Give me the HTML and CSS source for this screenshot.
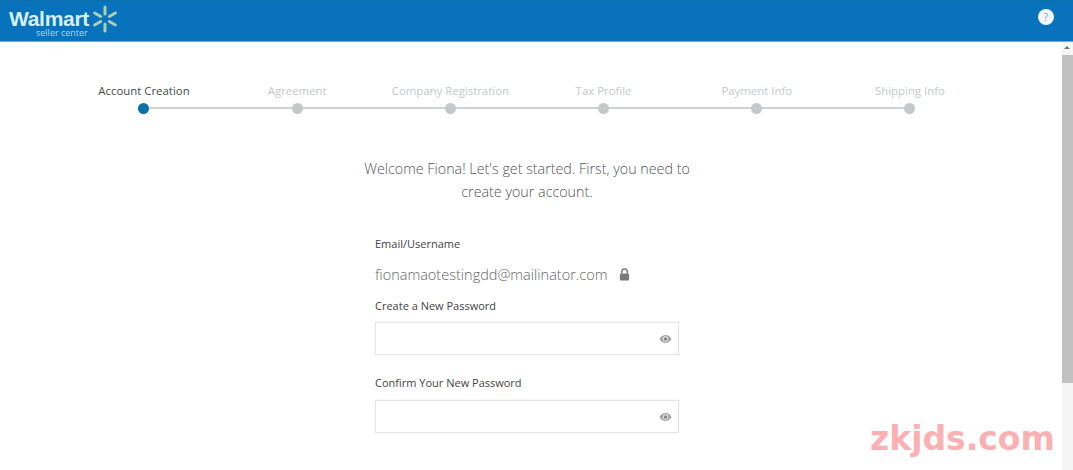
FILE: index.html
```html
<!DOCTYPE html>
<html>

<head>
    <meta charset="utf-8" />
    <title>Seller Center</title>
    <link rel="stylesheet" href="styles.css">
</head>

<body>
    <header class="topbar">
        <div class="brand">
            <div class="brand-text">
                <div class="brand-name">Walmart</div>
                <div class="brand-sub">seller center</div>
            </div>
            <svg class="spark" viewBox="0 0 30 30" width="30" height="30">
                <g stroke="#a9d0b4" stroke-width="3" stroke-linecap="round">
                    <line x1="15" y1="3" x2="15" y2="10" />
                    <line x1="15" y1="20" x2="15" y2="27" />
                    <line x1="4.6" y1="9" x2="10.7" y2="12.5" />
                    <line x1="19.3" y1="17.5" x2="25.4" y2="21" />
                    <line x1="4.6" y1="21" x2="10.7" y2="17.5" />
                    <line x1="19.3" y1="12.5" x2="25.4" y2="9" />
                </g>
            </svg>
        </div>
        <div class="help">?</div>
    </header>

    <div class="page">
        <main class="content">
            <ol class="steps">
                <li class="step active"><span class="step-label">Account Creation</span><span class="dot"></span></li>
                <li class="step"><span class="step-label">Agreement</span><span class="dot"></span></li>
                <li class="step"><span class="step-label">Company Registration</span><span class="dot"></span></li>
                <li class="step"><span class="step-label">Tax Profile</span><span class="dot"></span></li>
                <li class="step"><span class="step-label">Payment Info</span><span class="dot"></span></li>
                <li class="step"><span class="step-label">Shipping Info</span><span class="dot"></span></li>
            </ol>

            <p class="welcome">Welcome Fiona! Let's get started. First, you need to<br>create your account.</p>

            <form class="account-form">
                <label class="field-label">Email/Username</label>
                <div class="email-row">
                    <span>fionamaotestingdd@mailinator.com</span>
                    <svg class="lock" viewBox="0 0 12 14" width="11" height="13">
                        <path d="M3 6V4a3 3 0 0 1 6 0v2" fill="none" stroke="#7a7a7a" stroke-width="1.6" />
                        <rect x="1" y="6" width="10" height="7.5" rx="1" fill="#7a7a7a" />
                    </svg>
                </div>

                <label class="field-label password-label">Create a New Password</label>
                <div class="input-box">
                    <svg class="eye" viewBox="0 0 14 10" width="13" height="10">
                        <path d="M0.5 5C2.2 2 4.4 0.8 7 0.8S11.8 2 13.5 5C11.8 8 9.6 9.2 7 9.2S2.2 8 0.5 5Z" fill="#a5a5a5" />
                        <circle cx="7" cy="5" r="2.9" fill="#eee" />
                        <circle cx="7" cy="5" r="2" fill="#858585" />
                    </svg>
                </div>

                <label class="field-label confirm-label">Confirm Your New Password</label>
                <div class="input-box">
                    <svg class="eye" viewBox="0 0 14 10" width="13" height="10">
                        <path d="M0.5 5C2.2 2 4.4 0.8 7 0.8S11.8 2 13.5 5C11.8 8 9.6 9.2 7 9.2S2.2 8 0.5 5Z" fill="#a5a5a5" />
                        <circle cx="7" cy="5" r="2.9" fill="#eee" />
                        <circle cx="7" cy="5" r="2" fill="#858585" />
                    </svg>
                </div>
            </form>
        </main>

        <div class="scrollbar">
            <div class="scroll-arrow"></div>
            <div class="scroll-thumb"></div>
        </div>
    </div>

    <div class="watermark">zkjds.com</div>
</body>

</html>
```

FILE: styles.css
```css
html,
body {
    height: 100%;
}

body {
    margin: 0;
    overflow: hidden;
    display: flex;
    flex-direction: column;
    background-color: #fff;
    font-family: "Open Sans", "Liberation Sans", sans-serif;
    color: #444;
}

.topbar {
    flex: none;
    height: 42px;
    box-sizing: border-box;
    border-top: 1px solid #0a6ea6;
    border-bottom: 1px solid #5fb2de;
    background-color: #0872bd;
    display: flex;
    align-items: flex-start;
    justify-content: space-between;
    padding: 0 19px 0 9px;
}

.brand {
    display: flex;
    align-items: flex-start;
}

.brand-text {
    width: 81px;
}

.brand-name {
    margin-top: 8px;
    font-family: "Liberation Sans", sans-serif;
    font-size: 21px;
    line-height: 20px;
    font-weight: 700;
    letter-spacing: -0.3px;
    color: #d6f0f7;
}

.brand-sub {
    padding-left: 27px;
    font-size: 9px;
    line-height: 8px;
    white-space: nowrap;
    color: #a9d8ee;
}

.spark {
    margin: 3px 0 0 0;
}

.help {
    width: 16px;
    height: 16px;
    margin-top: 8px;
    border-radius: 50%;
    background-color: #f2f8fb;
    color: #8a9aa5;
    font-size: 10px;
    line-height: 16px;
    text-align: center;
}

.page {
    flex: 1;
    min-height: 0;
    display: flex;
}

.content {
    flex: 1;
    min-width: 0;
    display: flex;
    flex-direction: column;
}

.steps {
    list-style: none;
    display: grid;
    grid-template-columns: repeat(6, 153.2px);
    margin: 0;
    padding: 41px 0 0 67.4px;
}

.step {
    position: relative;
    display: flex;
    flex-direction: column;
    align-items: center;
    color: #c4c8ca;
    font-size: 11.4px;
}

.step-label {
    height: 17px;
    line-height: 15px;
    white-space: nowrap;
}

.active {
    color: #4a4a4a;
}

.dot {
    position: relative;
    z-index: 1;
    width: 11px;
    height: 11px;
    margin-top: 3px;
    border-radius: 50%;
    background-color: #c3c8c9;
}

.active .dot {
    background-color: #0d6fa6;
}

/* connector runs to the next step's dot */
.step:not(:last-child)::after {
    content: "";
    position: absolute;
    left: 50%;
    top: 24px;
    width: 100%;
    height: 2px;
    background-color: #cdd2d2;
}

.welcome {
    margin: 43px 0 0 0;
    padding-right: 8px;
    text-align: center;
    font-size: 14.3px;
    font-weight: 300;
    line-height: 23px;
    color: #555;
}

.account-form {
    width: 304px;
    margin: 33px 0 0 375px;
    display: flex;
    flex-direction: column;
}

.field-label {
    font-size: 11px;
    line-height: 16px;
    color: #444;
}

.email-row {
    margin-top: 12px;
    display: flex;
    align-items: center;
    gap: 12px;
    height: 20px;
    font-size: 14.5px;
    font-weight: 300;
    white-space: nowrap;
    color: #666;
}

.password-label {
    margin-top: 14px;
}

.confirm-label {
    margin-top: 20px;
    margin-bottom: 1px;
}

.input-box {
    height: 33px;
    margin-top: 8px;
    box-sizing: border-box;
    border: 1px solid #e6e6e6;
    box-shadow: 0 0 2px #eee;
    display: flex;
    align-items: center;
    justify-content: flex-end;
    padding-right: 6px;
}

.scrollbar {
    flex: none;
    width: 11px;
    background-color: #f5f5f5;
    display: flex;
    flex-direction: column;
}

.scroll-arrow {
    height: 13px;
    position: relative;
}

.scroll-arrow::after {
    content: "";
    position: absolute;
    top: 4px;
    left: 2px;
    border-left: 3.5px solid transparent;
    border-right: 3.5px solid transparent;
    border-bottom: 3px solid #777;
}

.scroll-thumb {
    height: 328px;
    background-color: #c1c1c1;
}

/* stamped over the page by the site that reposted the screenshot */
.watermark {
    position: absolute;
    left: 870px;
    top: 418px;
    font-family: "DejaVu Sans", sans-serif;
    font-size: 33px;
    font-weight: 700;
    line-height: 42px;
    color: #fdb0b2;
}
```
